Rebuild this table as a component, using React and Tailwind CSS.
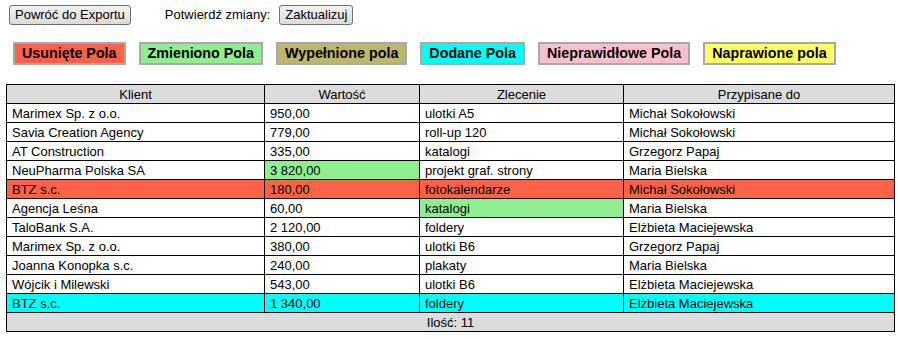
import React from 'react';

const LEGEND = [
  { label: 'Usunięte Pola', bg: 'bg-[#ff6347]' },
  { label: 'Zmieniono Pola', bg: 'bg-[#90ee90]' },
  { label: 'Wypełnione pola', bg: 'bg-[#bdb76b]' },
  { label: 'Dodane Pola', bg: 'bg-[#00ffff]' },
  { label: 'Nieprawidłowe Pola', bg: 'bg-[#ffc0cb]' },
  { label: 'Naprawione pola', bg: 'bg-[#ffff66]' },
];

// row: [klient, wartosc, zlecenie, przypisane], rowBg, per-cell highlight
const ROWS = [
  { cells: ['Marimex Sp. z o.o.', '950,00', 'ulotki A5', 'Michał Sokołowski'] },
  { cells: ['Savia Creation Agency', '779,00', 'roll-up 120', 'Michał Sokołowski'] },
  { cells: ['AT Construction', '335,00', 'katalogi', 'Grzegorz Papaj'] },
  { cells: ['NeuPharma Polska SA', '3 820,00', 'projekt graf. strony', 'Maria Bielska'], changed: 1 },
  { cells: ['BTZ s.c.', '180,00', 'fotokalendarze', 'Michał Sokołowski'], rowBg: 'bg-[#ff6347]' },
  { cells: ['Agencja Leśna', '60,00', 'katalogi', 'Maria Bielska'], changed: 2 },
  { cells: ['TaloBank S.A.', '2 120,00', 'foldery', 'Elżbieta Maciejewska'] },
  { cells: ['Marimex Sp. z o.o.', '380,00', 'ulotki B6', 'Grzegorz Papaj'] },
  { cells: ['Joanna Konopka s.c.', '240,00', 'plakaty', 'Maria Bielska'] },
  { cells: ['Wójcik i Milewski', '543,00', 'ulotki B6', 'Elżbieta Maciejewska'] },
  { cells: ['BTZ s.c.', '1 340,00', 'foldery', 'Elżbieta Maciejewska'], rowBg: 'bg-[#00ffff]' },
];

function WinButton({ children }) {
  return (
    <button className="h-[20px] px-[5px] text-[13px] leading-[16px] text-black border border-[#707070] rounded-[3px] bg-gradient-to-b from-[#f2f2f2] to-[#dcdcdc]">
      {children}
    </button>
  );
}

export default function App() {
  return (
    <div className="w-[898px] h-[339px] bg-white text-black font-['Liberation_Sans',Arial,sans-serif] text-[13px]">
      {/* Top bar */}
      <div className="flex items-center pt-[5px] pl-[9px]">
        <WinButton>Powróć do Exportu</WinButton>
        <span className="ml-[34px] mr-[9px]">Potwierdź zmiany:</span>
        <WinButton>Zaktualizuj</WinButton>
      </div>

      {/* Legend */}
      <div className="flex gap-[13px] pl-[13px] mt-[17px]">
        {LEGEND.map((l) => (
          <div
            key={l.label}
            className={`${l.bg} h-[23px] px-[7px] border-2 border-[#a9a9a9] font-bold text-[14.3px] leading-[19px] whitespace-nowrap`}
          >
            {l.label}
          </div>
        ))}
      </div>

      {/* Table */}
      <table className="ml-[6px] mt-[19px] border-collapse table-fixed w-[888px] border border-black">
        <colgroup>
          <col className="w-[258px]" />
          <col className="w-[155px]" />
          <col className="w-[204px]" />
          <col className="w-[271px]" />
        </colgroup>
        <thead>
          <tr className="bg-[#dcdcdc] h-[19px]">
            {['Klient', 'Wartość', 'Zlecenie', 'Przypisane do'].map((h) => (
              <th key={h} className="border border-black font-normal text-center p-0 leading-[17px]">
                {h}
              </th>
            ))}
          </tr>
        </thead>
        <tbody>
          {ROWS.map((r, i) => (
            <tr key={i} className={`h-[19px] ${r.rowBg || 'bg-white'}`}>
              {r.cells.map((c, j) => (
                <td
                  key={j}
                  className={`border border-black py-0 pl-[5px] pr-0 leading-[17px] whitespace-nowrap ${
                    r.changed === j ? 'bg-[#90ee90]' : ''
                  }`}
                >
                  {c}
                </td>
              ))}
            </tr>
          ))}
          <tr className="bg-[#dcdcdc] h-[19px]">
            <td colSpan={4} className="border border-black text-center p-0 leading-[17px]">
              Ilość: 11
            </td>
          </tr>
        </tbody>
      </table>
    </div>
  );
}
